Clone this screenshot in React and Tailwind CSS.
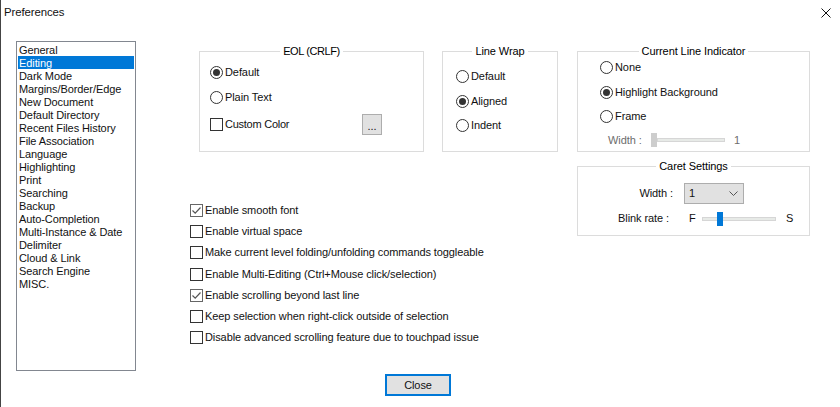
import React from "react";

const Radio = ({ on, label, className = "" }) => (
  <div className={"flex items-center h-[13px] " + className}>
    <span className="w-[13px] h-[13px] rounded-full border border-[#333] bg-white flex items-center justify-center shrink-0">
      {on && <span className="w-[7px] h-[7px] rounded-full bg-[#333]" />}
    </span>
    <span className="ml-[2px] whitespace-nowrap">{label}</span>
  </div>
);

const Check = ({ on, label, className = "" }) => (
  <div className={"flex items-center h-[13px] " + className}>
    <span className={"w-[13px] h-[13px] border bg-white flex items-center justify-center shrink-0 " + (on ? "border-[#666]" : "border-[#333]")}>
      {on && (
        <svg width="11" height="11" viewBox="0 0 11 11" fill="none">
          <path d="M1.5 5.5 L4.2 8.2 L9.5 2.5" stroke="#555" strokeWidth="1.2" />
        </svg>
      )}
    </span>
    <span className="ml-[2px] whitespace-nowrap">{label}</span>
  </div>
);

const Group = ({ title, className = "", bodyClass = "", legendClass = "", children }) => (
  <fieldset className={"border border-[#dcdcdc] min-w-0 " + className}>
    <legend className={"mx-auto px-[3px] leading-[13px] text-[#000] " + legendClass}>{title}</legend>
    <div className={bodyClass}>{children}</div>
  </fieldset>
);

const items = ["General","Editing","Dark Mode","Margins/Border/Edge","New Document","Default Directory","Recent Files History","File Association","Language","Highlighting","Print","Searching","Backup","Auto-Completion","Multi-Instance & Date","Delimiter","Cloud & Link","Search Engine","MISC."];

const checks = [
  [true, "Enable smooth font"],
  [false, "Enable virtual space"],
  [false, "Make current level folding/unfolding commands toggleable"],
  [false, "Enable Multi-Editing (Ctrl+Mouse click/selection)"],
  [true, "Enable scrolling beyond last line"],
  [false, "Keep selection when right-click outside of selection"],
  [false, "Disable advanced scrolling feature due to touchpad issue"],
];

export default function App() {
  return (
    <div className="w-[840px] h-[407px] bg-white overflow-hidden text-[11px] leading-[13px] tracking-[-0.09px] text-[#111] font-['Liberation_Sans',sans-serif] border-l border-[#444]">
      <div className="flex items-center justify-between h-[24px] pt-[1px] pl-[3px] pr-[9px] text-[11.4px]">
        <span>Preferences</span>
        <svg width="10" height="10" viewBox="0 0 10 10" fill="none">
          <path d="M0.5 0.5 L9.5 9.5 M9.5 0.5 L0.5 9.5" stroke="#111" strokeWidth="1" />
        </svg>
      </div>
      <div className="flex mt-[17px] ml-[15px]">
        <div className="w-[120px] h-[330px] border border-[#828790] p-[1px] shrink-0">
          {items.map((t, i) => (
            <div key={t} className={"h-[13px] pl-[1px] pt-[1px] whitespace-nowrap " + (i === 1 ? "bg-[#0078d7] text-white" : "")}>{t}</div>
          ))}
        </div>
        <div className="ml-[54px]">
          <div className="flex ml-[9px] mt-[4px]">
            <Group title="EOL (CRLF)" legendClass="tracking-[-0.4px]" className="w-[225px] h-[107px]" bodyClass="pl-[10px]">
              <Radio on label="Default" className="mt-[8px]" />
              <Radio label="Plain Text" className="mt-[12px]" />
              <div className="flex items-center mt-[10px]">
                <Check label="Custom Color" className="w-[152px] tracking-[-0.25px]" />
                <div className="w-[20px] h-[21px] bg-[#e1e1e1] border border-[#adadad] text-center leading-[22px]">...</div>
              </div>
            </Group>
            <Group title="Line Wrap" className="w-[116px] h-[107px] ml-[18px]" bodyClass="pl-[13px]">
              <Radio label="Default" className="mt-[12px]" />
              <Radio on label="Aligned" className="mt-[12px]" />
              <Radio label="Indent" className="mt-[11px]" />
            </Group>
            <div className="ml-[19px]">
              <Group title="Current Line Indicator" className="w-[233px] h-[107px]" bodyClass="pl-[22px]">
                <Radio label="None" className="mt-[3px]" />
                <Radio on label="Highlight Background" className="mt-[12px]" />
                <Radio label="Frame" className="mt-[11px]" />
                <div className="flex items-center mt-[10px] text-[#6d6d6d]">
                  <span className="ml-[8px] w-[43px] whitespace-nowrap">Width :</span>
                  <span className="w-[6px] h-[14px] bg-[#cdcdcd] shrink-0" />
                  <span className="w-[68px] h-[4px] bg-[#e7eae7] border border-[#d6d6d6]" />
                  <span className="ml-[9px]">1</span>
                </div>
              </Group>
              <Group title="Caret Settings" className="w-[233px] h-[76px] mt-[8px]">
                <div className="flex items-center mt-[10px]">
                  <span className="w-[95px] text-right">Width :</span>
                  <div className="ml-[11px] w-[60px] h-[21px] bg-[#e1e1e1] border border-[#adadad] flex items-center justify-between pl-[4px] pr-[5px]">
                    <span>1</span>
                    <svg width="9" height="6" viewBox="0 0 9 6" fill="none"><path d="M0.5 0.5 L4.5 4.5 L8.5 0.5" stroke="#555" /></svg>
                  </div>
                </div>
                <div className="flex items-center mt-[8px]">
                  <span className="w-[91px] text-right">Blink rate :</span>
                  <span className="ml-[20px] w-[13px]">F</span>
                  <span className="w-[74px] h-[4px] bg-[#e7eae7] border border-[#d6d6d6] flex items-center shrink-0">
                    <span className="ml-[14px] w-[6px] h-[14px] bg-[#0078d7] shrink-0" />
                  </span>
                  <span className="ml-[10px]">S</span>
                </div>
              </Group>
            </div>
          </div>
          <div className="flex flex-col gap-[8.2px] -mt-[32px]">
            {checks.map(([on, t]) => <Check key={t} on={on} label={t} />)}
          </div>
        </div>
      </div>
      <div className="flex justify-center ml-[-5px] mt-[3px]">
        <div className="w-[66px] h-[22px] bg-[#e1e1e1] border-2 border-[#0078d7] flex items-center justify-center">Close</div>
      </div>
    </div>
  );
}
